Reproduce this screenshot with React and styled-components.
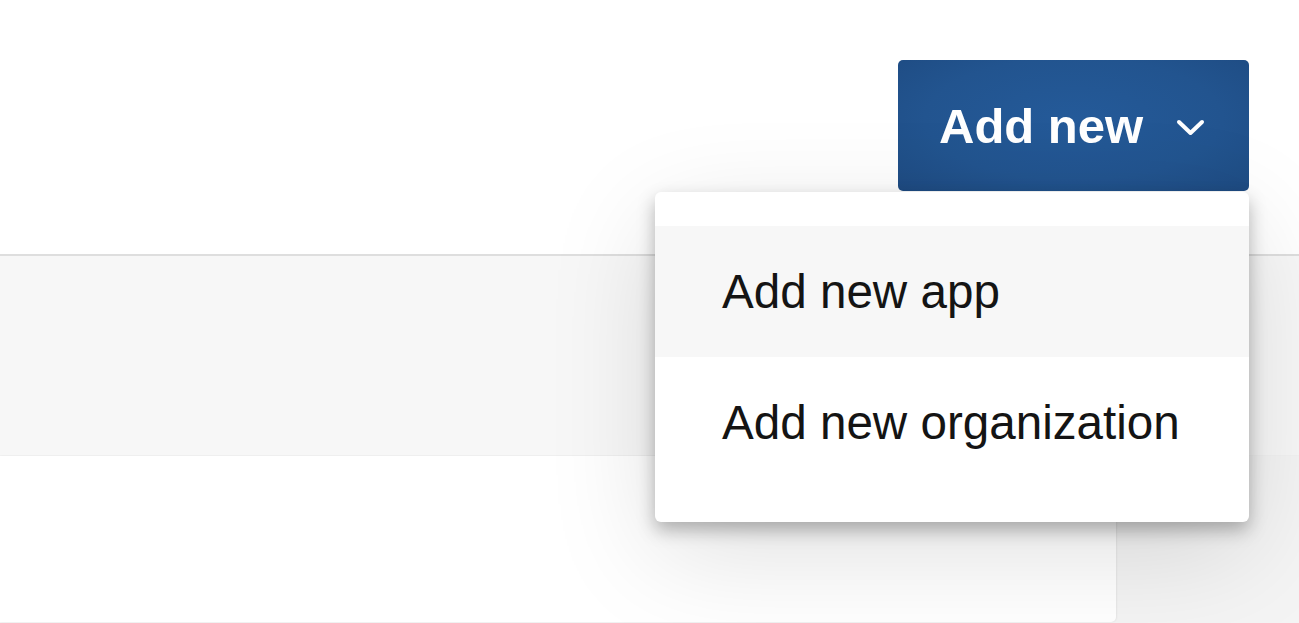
import React from "react";
import styled, { createGlobalStyle } from "styled-components";

const Global = createGlobalStyle`
  html, body {
    margin: 0;
    padding: 0;
    background: #f4f4f4;
    font-family: "Liberation Sans", Arial, sans-serif;
  }
  #root {
    height: 623px;
    overflow: hidden;
  }
`;

const Page = styled.div`
  display: flex;
  flex-direction: column;
  height: 623px;
`;

const Header = styled.header`
  height: 256px;
  background: #fff;
  border-bottom: 2px solid #dedede;
  display: flex;
  justify-content: flex-end;
  align-items: flex-start;
  padding: 60px 50px 0 0;
  box-sizing: border-box;
`;

const Menu = styled.div`
  position: relative;
`;

const Trigger = styled.button`
  width: 351px;
  height: 131px;
  border: none;
  border-radius: 5px;
  background: radial-gradient(ellipse at 50% 45%, #245a99 0%, #22548f 60%, #1e4b82 100%);
  color: #fff;
  font-family: inherit;
  font-size: 49px;
  font-weight: 700;
  display: flex;
  align-items: center;
  justify-content: space-between;
  padding: 0 43px 0 41px;
  box-sizing: border-box;
  cursor: pointer;
  svg {
    width: 31px;
    height: 20px;
    margin-top: 2px;
  }
`;

const Dropdown = styled.ul`
  position: absolute;
  top: 132px;
  right: 0;
  width: 594px;
  margin: 0;
  padding: 34px 0;
  list-style: none;
  background: #fff;
  border-radius: 6px;
  box-shadow: 0 8px 18px rgba(0, 0, 0, 0.28), 0 30px 110px rgba(0, 0, 0, 0.13);
  z-index: 5;
`;

const Item = styled.li`
  height: 131px;
  display: flex;
  align-items: center;
  padding-left: 67px;
  font-size: 47.6px;
  color: #141414;
  background: ${(p) => (p.$active ? "#f7f7f7" : "#fff")};
`;

const Band = styled.div`
  height: 200px;
  background: #f7f7f7;
  border-bottom: 1px solid #f2f2f2;
  box-sizing: border-box;
`;

const Content = styled.div`
  flex: 1;
  display: flex;
`;

const Card = styled.div`
  width: 1116px;
  background: #fff;
  border-bottom-right-radius: 5px;
  box-shadow: 1px 0 2px rgba(0, 0, 0, 0.06);
  margin-bottom: 1px;
`;

export default function App() {
  return (
    <>
      <Global />
      <Page>
        <Header>
          <Menu>
            <Trigger>
              Add new
              <svg viewBox="0 0 31 20" fill="none" stroke="#fff" strokeWidth="4" strokeLinecap="round" strokeLinejoin="round">
                <path d="M4 5 L15.5 16 L27 5" />
              </svg>
            </Trigger>
            <Dropdown>
              <Item $active>Add new app</Item>
              <Item>Add new organization</Item>
            </Dropdown>
          </Menu>
        </Header>
        <Band />
        <Content>
          <Card />
        </Content>
      </Page>
    </>
  );
}
